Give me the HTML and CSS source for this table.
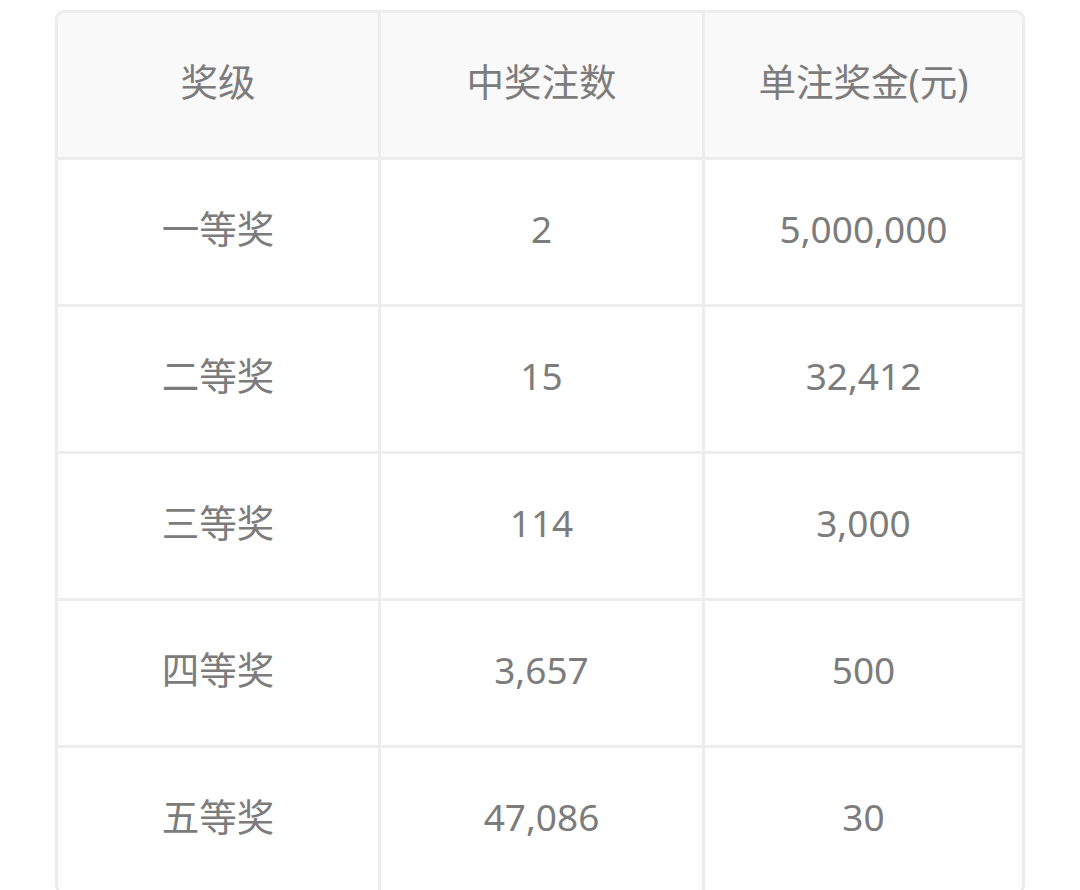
FILE: index.html
```html
<!DOCTYPE html>
<html lang="zh">
<head>
<meta charset="utf-8">
<link rel="stylesheet" href="styles.css">
</head>
<body>
<div class="table">
  <div class="cell head">奖级</div>
  <div class="cell head">中奖注数</div>
  <div class="cell head">单注奖金(元)</div>

  <div class="cell">一等奖</div>
  <div class="cell num">2</div>
  <div class="cell num">5,000,000</div>

  <div class="cell">二等奖</div>
  <div class="cell num">15</div>
  <div class="cell num">32,412</div>

  <div class="cell">三等奖</div>
  <div class="cell num">114</div>
  <div class="cell num">3,000</div>

  <div class="cell">四等奖</div>
  <div class="cell num">3,657</div>
  <div class="cell num">500</div>

  <div class="cell">五等奖</div>
  <div class="cell num">47,086</div>
  <div class="cell num">30</div>
</div>
</body>
</html>
```
FILE: styles.css
```css
html, body {
  margin: 0;
  padding: 0;
  background: #ffffff;
}
body {
  padding: 10px 0 0 55px;
  font-family: "Noto Sans", "Noto Sans CJK SC", sans-serif;
}
.table {
  width: 964px;
  border: 3px solid #ededed;
  border-radius: 9px;
  background: #ededed;
  display: grid;
  grid-template-columns: 320px 321px 317px;
  grid-auto-rows: 144px;
  gap: 3px;
  overflow: hidden;
}
.cell {
  background: #ffffff;
  display: flex;
  align-items: center;
  justify-content: center;
  padding-bottom: 7px;
  box-sizing: border-box;
  color: #7c7c7c;
  font-size: 37.5px;
  line-height: 1;
}
.cell.head {
  background: #f9f9f9;
}
.cell.num {
  font-size: 37px;
}
```
